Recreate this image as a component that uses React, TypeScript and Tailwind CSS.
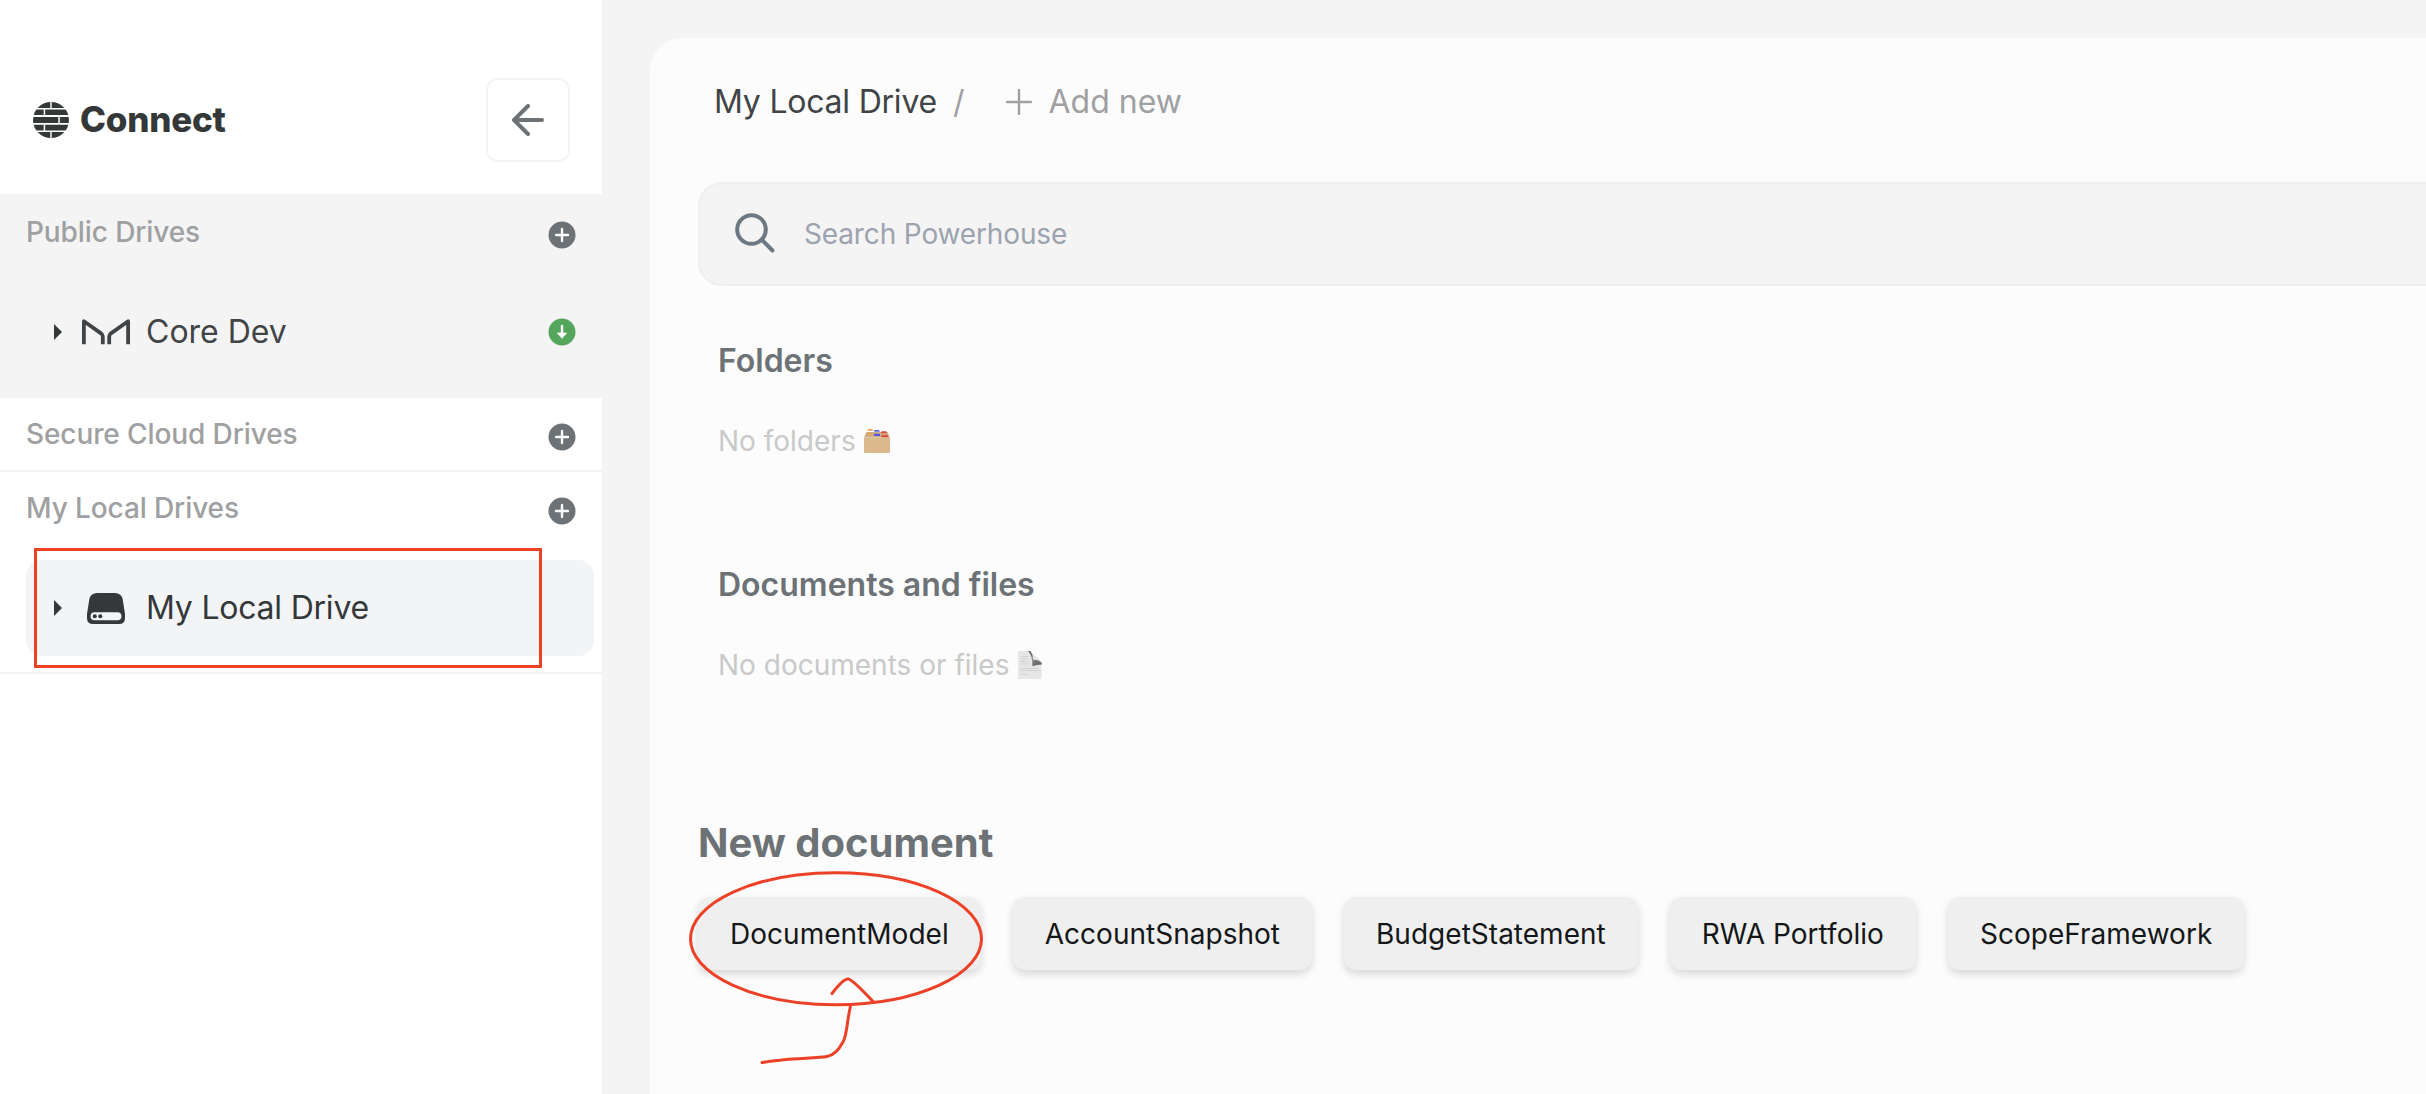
import React from 'react';

function PlusCircle() {
  return (
    <svg className="block size-7 shrink-0" viewBox="0 0 28 28">
      <circle cx="14" cy="14" r="13.5" fill="#6c7275" />
      <path d="M14 8v12M8 14h12" stroke="#fcfcfc" strokeWidth="2.4" strokeLinecap="round" />
    </svg>
  );
}

function SyncedCircle() {
  return (
    <svg className="block size-7 shrink-0" viewBox="0 0 28 28">
      <circle cx="14" cy="14" r="13.5" fill="#55a65d" />
      <path d="M14 8v9" stroke="#fff" strokeWidth="2.4" strokeLinecap="round" />
      <path d="M9.4 15h9.200L14 20.3z" fill="#fff" stroke="#fff" strokeWidth="0.8" strokeLinejoin="round" />
    </svg>
  );
}

function Caret() {
  return (
    <svg className="block h-4 w-2 shrink-0" viewBox="0 0 8 16">
      <path d="M0 0l8 8-8 8z" fill="#343839" />
    </svg>
  );
}

function BrickGlobe() {
  return (
    <svg className="block size-9 shrink-0" viewBox="0 0 36 36">
      <defs>
        <clipPath id="globe">
          <circle cx="18" cy="18" r="18" />
        </clipPath>
      </defs>
      <g clipPath="url(#globe)" fill="#343839">
        <path d="M0 0h17.3v6H0zM18.7 0H36v6H18.7z" />
        <path d="M0 7.4h10.7v5.6H0zM12.2 7.4H36v5.6H12.2z" />
        <path d="M0 14.9h25.3v6.1H0zM26.8 14.9H36v6.1h-9.2z" />
        <path d="M0 22.8h10.7v5.8H0zM12.2 22.8H36v5.8H12.2z" />
        <path d="M0 30h17.3v6H0zM18.7 30H36v6H18.7z" />
      </g>
    </svg>
  );
}

function MakerLogo() {
  return (
    <svg className="block h-[26px] w-12 shrink-0" viewBox="0 0 48 26" fill="none" stroke="#404446" strokeWidth="3.8" strokeLinejoin="round">
      <path d="M1.9 25.300V2.2L19.4 14.6Q20.800 15.8 20.800 17.8V25.300" />
      <path d="M46.1 25.300V2.2L28.6 14.6Q27.200 15.8 27.200 17.8V25.300" />
    </svg>
  );
}

function DriveIcon() {
  return (
    <svg className="block h-[31px] w-[38px] shrink-0" viewBox="0 0 38 31">
      <path d="M10 0h18q6.500 0 7.700 6.500L38 21v4q0 6-6 6H6q-6 0-6-6v-4L2.300 6.500Q3.500 0 10 0z" fill="#343839" />
      <rect x="3.600" y="19.200" width="30.800" height="8" rx="3.800" fill="#f3f4f6" />
      <circle cx="7.800" cy="23.200" r="2" fill="#343839" />
      <circle cx="13.300" cy="23.200" r="2" fill="#343839" />
    </svg>
  );
}

function FolderBoxEmoji() {
  return (
    <svg className="block h-6 w-[26px] shrink-0" viewBox="0 0 26 24">
      <path d="M2.500 3h21L26 8.500H0z" fill="#cdb088" />
      <path d="M4 0h4.300l.7 2H3.200z" fill="#f4a965" />
      <path d="M2.800 4h6v1.600H2.300z" fill="#ea9c56" />
      <path d="M10.500 1h4.600l.8 1.700h-6z" fill="#5f68ea" />
      <path d="M10 4.800h6v2.100h-6z" fill="#4c50ea" />
      <path d="M17.300 2.300h4.900l1 2h-6.200z" fill="#e2473c" />
      <path d="M17.500 6.200h6.100l.8 2h-6.900z" fill="#df3d35" />
      <path d="M0 8.500h26V23q0 1-1 1H1q-1 0-1-1z" fill="#dbb98c" />
    </svg>
  );
}

function PageEmoji() {
  return (
    <svg className="block h-7 w-6 shrink-0" viewBox="0 0 24 28">
      <defs>
        <linearGradient id="curl" x1="0" y1="0" x2="0.300" y2="1">
          <stop offset="0" stopColor="#5a5a5a" />
          <stop offset="0.600" stopColor="#8a8a8a" />
          <stop offset="1" stopColor="#666" />
        </linearGradient>
      </defs>
      <path d="M0 0h12L23.500 10.500V28H0z" fill="#e6e6e6" />
      <path d="M2.500 5.500h8M2.500 8h8M2.500 10.500h8M2.500 13h8M2.500 17.500h18M2.500 19.500h18M2.500 23.500h6" stroke="#d3d3d3" strokeWidth="1" />
      <path d="M10 0h2.200q2.800 3 2.800 8.700 6-.4 8.800 3.300v1.500q-5 0-9.300 1.700Q14.500 4 10 0z" fill="url(#curl)" />
    </svg>
  );
}

function SectionHeader({ label }: { label: string }) {
  return (
    <div className="flex h-[74px] items-center justify-between pr-[26px] pl-[26px]">
      <span className="-mt-[7px] text-[28px] leading-8 font-medium tracking-[-0.1px] text-[#9ea0a1]">{label}</span>
      <PlusCircle />
    </div>
  );
}

function Sidebar() {
  return (
    <aside className="flex w-[602px] shrink-0 flex-col bg-white">
      <header className="flex h-[194px] items-center justify-between pt-[46px] pr-8 pl-[33px]">
        <div className="flex items-center gap-[11px]">
          <BrickGlobe />
          <span className="-mt-0.5 text-[35px] leading-10 font-extrabold tracking-[-0.25px] text-[#343839]">Connect</span>
        </div>
        <button className="flex size-[84px] items-center justify-center rounded-xl border-2 border-[#f4f4f4]">
          <svg className="block h-8 w-8" viewBox="0 0 32 32" fill="none" stroke="#6c7275" strokeWidth="4" strokeLinecap="round" strokeLinejoin="round">
            <path d="M16 2L2 16l14 14M2 16h28" />
          </svg>
        </button>
      </header>

      <section className="h-[204px] bg-[#f4f4f4] pt-1">
        <SectionHeader label="Public Drives" />
        <div className="mt-3 flex h-24 items-center pr-[26px] pl-[54px]">
          <Caret />
          <div className="ml-5 flex w-12 justify-center">
            <MakerLogo />
          </div>
          <span className="-mt-px ml-4 flex-1 text-[32px] leading-10 text-[#404446]">Core Dev</span>
          <SyncedCircle />
        </div>
      </section>

      <section className="h-[74px] border-b-2 border-[#f4f4f4] pt-0.5">
        <SectionHeader label="Secure Cloud Drives" />
      </section>

      <section className="h-[202px] border-b-2 border-[#f4f4f4] pt-0.5">
        <SectionHeader label="My Local Drives" />
        <div className="mt-3 mr-2 ml-[26px] flex h-24 items-center rounded-2xl bg-[#f3f4f6] pl-7">
          <Caret />
          <div className="ml-5 flex w-12 justify-center">
            <DriveIcon />
          </div>
          <span className="-mt-px ml-4 text-[32px] leading-10 tracking-[-0.22px] text-[#343839]">My Local Drive</span>
        </div>
      </section>
    </aside>
  );
}

const documentTypes = ['DocumentModel', 'AccountSnapshot', 'BudgetStatement', 'RWA Portfolio', 'ScopeFramework'];

function Content() {
  return (
    <main className="mt-[38px] ml-12 min-w-0 flex-1 rounded-tl-[32px] bg-[#fcfcfc] pl-12">
      <nav className="flex h-[128px] items-center pl-4 text-[32px] leading-10 text-[#9ea0a1]">
        <span className="tracking-[-0.22px] text-[#404446]">My Local Drive</span>
        <span className="ml-4">/</span>
        <svg className="ml-[41px] block size-[26px]" viewBox="0 0 26 26" stroke="#9ea0a1" strokeWidth="2.400" strokeLinecap="round">
          <path d="M13 1v24M1 13h24" />
        </svg>
        <span className="ml-[17px]">Add new</span>
      </nav>

      <div className="mt-4 flex h-[104px] items-center rounded-l-3xl border-2 border-r-0 border-[#efefef] bg-[#f4f4f4] pl-[35px]">
        <svg className="-mt-0.5 block size-10 shrink-0" viewBox="0 0 40 40" fill="none" stroke="#6c7883" strokeWidth="4" strokeLinecap="round">
          <circle cx="16.500" cy="16.500" r="14.300" />
          <path d="M27 27l10.500 10.500" />
        </svg>
        <span className="-mt-px ml-[29px] text-[28px] leading-8 tracking-[-0.14px] text-[#9ca3af]">Search Powerhouse</span>
      </div>

      <section className="h-[224px] pt-[55px] pl-5">
        <h2 className="text-[32px] leading-10 font-semibold text-[#6c7275]">Folders</h2>
        <div className="mt-10 flex h-10 items-center gap-2 text-[28px] text-[#c8c9c9]">
          <span>No folders</span>
          <FolderBoxEmoji />
        </div>
      </section>

      <section className="h-[224px] pt-[55px] pl-5">
        <h2 className="text-[32px] leading-10 font-semibold text-[#6c7275]">Documents and files</h2>
        <div className="mt-10 flex h-10 items-center gap-[9px] text-[28px] text-[#c8c9c9]">
          <span>No documents or files</span>
          <PageEmoji />
        </div>
      </section>

      <section className="pt-[85px]">
        <h1 className="text-[40px] leading-[48px] font-bold text-[#6c7275]">New document</h1>
        <div className="mt-[30px] flex gap-8">
          {documentTypes.map((name) => (
            <button
              key={name}
              className="h-[73px] rounded-xl bg-[#efefef] px-8 text-[28px] leading-10 tracking-[0.02px] whitespace-nowrap text-[#141718] shadow-[0_4px_8px_rgba(0,0,0,0.15)]"
            >
              {name}
            </button>
          ))}
        </div>
      </section>
    </main>
  );
}

function Annotations() {
  return (
    <svg className="pointer-events-none absolute inset-0 h-full w-full" viewBox="0 0 2426 1094" fill="none" stroke="#ec4127" strokeWidth="3" strokeLinecap="round">
      <rect x="35.500" y="549.500" width="505" height="117" />
      <ellipse cx="836" cy="938.700" rx="145.500" ry="66" />
      <path d="M832 993.500Q843 979 848 979Q852 979 873.500 1002" />
      <path d="M850.500 1006C847 1020 847 1036 843 1042Q836 1055 827 1056.500C815 1058.500 785 1058 762 1062.500" />
    </svg>
  );
}

export default function App() {
  return (
    <div className="relative flex h-[1094px] w-[2426px] overflow-hidden bg-[#f4f4f4] font-['Inter',sans-serif]">
      <Sidebar />
      <Content />
      <Annotations />
    </div>
  );
}
